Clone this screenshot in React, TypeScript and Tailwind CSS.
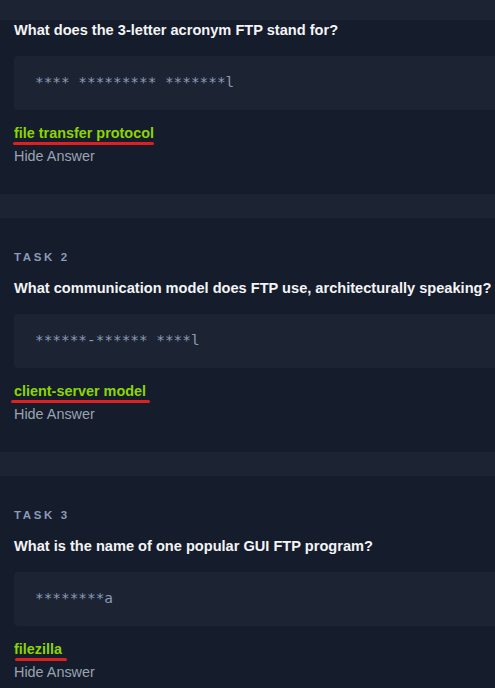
const tasks = [
  {
    label: "",
    question: "What does the 3-letter acronym FTP stand for?",
    placeholder: "**** ********* *******l",
    answer: "file transfer protocol",
    lineClass: "ml-[-1px] w-[141px]",
  },
  {
    label: "Task 2",
    question: "What communication model does FTP use, architecturally speaking?",
    placeholder: "******-****** ****l",
    answer: "client-server model",
    lineClass: "ml-[-3px] w-[139px]",
  },
  {
    label: "Task 3",
    question: "What is the name of one popular GUI FTP program?",
    placeholder: "********a",
    answer: "filezilla",
    lineClass: "ml-[1px] w-[52px]",
  },
];

function TaskBlock({ task }: { task: (typeof tasks)[number] }) {
  return (
    <div className="pl-[14px]">
      {task.label && (
        <div className="mt-[31px] h-[16px] text-[11.5px] leading-[16px] font-bold uppercase tracking-[2.6px] text-[#8a9bb8]">
          {task.label}
        </div>
      )}
      <div
        className={`${task.label ? "mt-[13px]" : "mt-0"} whitespace-nowrap text-[14.6px] leading-[20px] font-bold text-[#f3f4f6]`}
      >
        {task.question}
      </div>
      <div className="mt-[16px] flex h-[54px] items-center rounded-l-[4px] bg-[#1c2433] pl-[21px]">
        <span className="font-['DejaVu_Sans_Mono',monospace] text-[14.4px] text-[#8a9ab5]">
          {task.placeholder}
        </span>
      </div>
      <div className="mt-[14px] text-[14.4px] leading-[18px] font-bold text-[#8cd600]">
        {task.answer}
      </div>
      <div className={`h-[3px] rounded-full bg-[#e0201f] ${task.lineClass}`} />
      <div className="mt-[1px] text-[14.4px] leading-[20px] text-[#9aa3b2]">Hide Answer</div>
    </div>
  );
}

export default function App() {
  return (
    <div className="h-[688px] w-[495px] overflow-hidden bg-[#151c2b] font-['Liberation_Sans',Arial,sans-serif]">
      <div className="h-[20px] bg-[#1c2333]" />
      {tasks.map((task, i) => (
        <div key={i}>
          {i > 0 && <div className="mt-[28px] h-[24px] bg-[#1c2333]" />}
          <TaskBlock task={task} />
        </div>
      ))}
    </div>
  );
}
